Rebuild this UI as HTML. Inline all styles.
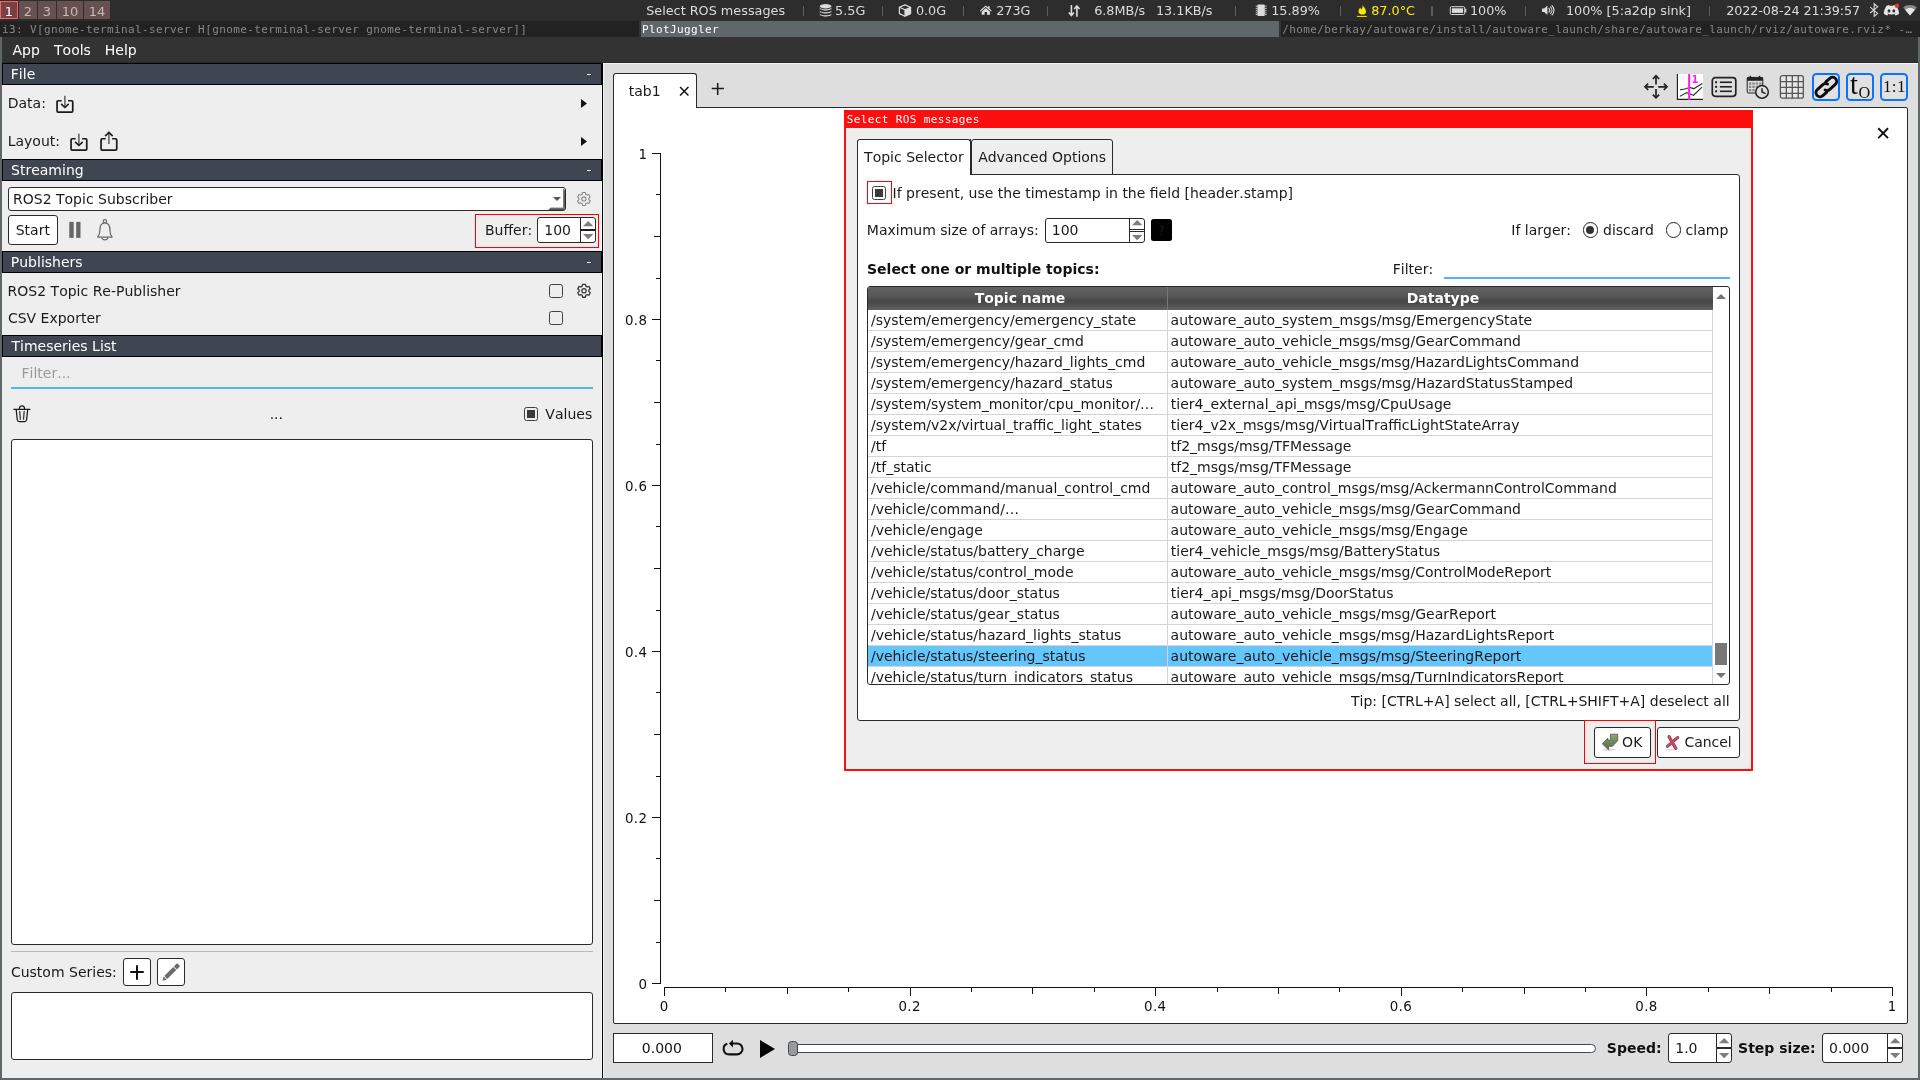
<!DOCTYPE html>
<html lang="en"><head><meta charset="utf-8"><title>PlotJuggler - Select ROS messages</title>
<style>
html,body{margin:0;padding:0}
body{width:1920px;height:1080px;position:relative;overflow:hidden;background:#2d2d2d;font-family:'DejaVu Sans','Liberation Sans',sans-serif;font-size:14px;color:#1a1a1a}
body div,body span.t,body svg{position:absolute;box-sizing:border-box}
svg{overflow:visible}
span.t{white-space:pre;font-kerning:none}
.hdr{background:#3f4651;border:1px solid #000}
.wb{background:#fff;border:1px solid #2a2a2a;border-radius:3px}
</style></head>
<body>
<div id="root" style="left:0;top:0;width:1920px;height:1080px;will-change:transform">
<div style="left:0px;top:0px;width:1920px;height:21px;background:#2d2d2d"></div>
<div style="left:0px;top:1px;width:18px;height:18px;background:#7d3f42;border:1px solid #e86a6a"></div>
<span class="t" style="left:0px;top:4px;font-size:13px;line-height:16px;color:#ffffff;width:18px;text-align:center;">1</span>
<div style="left:19px;top:1px;width:18px;height:18px;background:#665050"></div>
<span class="t" style="left:19px;top:4px;font-size:13px;line-height:16px;color:#c9b9b9;width:18px;text-align:center;">2</span>
<div style="left:38px;top:1px;width:18px;height:18px;background:#665050"></div>
<span class="t" style="left:38px;top:4px;font-size:13px;line-height:16px;color:#c9b9b9;width:18px;text-align:center;">3</span>
<div style="left:57px;top:1px;width:26px;height:18px;background:#665050"></div>
<span class="t" style="left:57px;top:4px;font-size:13px;line-height:16px;color:#c9b9b9;width:26px;text-align:center;">10</span>
<div style="left:84px;top:1px;width:26px;height:18px;background:#665050"></div>
<span class="t" style="left:84px;top:4px;font-size:13px;line-height:16px;color:#c9b9b9;width:26px;text-align:center;">14</span>
<span class="t" style="left:646.18px;top:3px;font-size:12.8px;line-height:15px;color:#dcdcdc;">Select ROS messages</span>
<div style="left:802.8px;top:5.6px;width:1.2px;height:10.8px;background:#5c5c5c"></div>
<div style="left:882.2px;top:5.6px;width:1.2px;height:10.8px;background:#5c5c5c"></div>
<div style="left:963.0px;top:5.6px;width:1.2px;height:10.8px;background:#5c5c5c"></div>
<div style="left:1047.2px;top:5.6px;width:1.2px;height:10.8px;background:#5c5c5c"></div>
<div style="left:1235.2px;top:5.6px;width:1.2px;height:10.8px;background:#5c5c5c"></div>
<div style="left:1340.3px;top:5.6px;width:1.2px;height:10.8px;background:#5c5c5c"></div>
<div style="left:1431.4px;top:5.6px;width:1.2px;height:10.8px;background:#5c5c5c"></div>
<div style="left:1524.8px;top:5.6px;width:1.2px;height:10.8px;background:#5c5c5c"></div>
<div style="left:1709.3px;top:5.6px;width:1.2px;height:10.8px;background:#5c5c5c"></div>
<span class="t" style="left:835.11px;top:3px;font-size:12.8px;line-height:15px;color:#dcdcdc;">5.5G</span>
<span class="t" style="left:915.88px;top:3px;font-size:12.8px;line-height:15px;color:#dcdcdc;">0.0G</span>
<span class="t" style="left:996.13px;top:3px;font-size:12.8px;line-height:15px;color:#dcdcdc;">273G</span>
<span class="t" style="left:1094.15px;top:3px;font-size:12.8px;line-height:15px;color:#dcdcdc;">6.8MB/s</span>
<span class="t" style="left:1155.9px;top:3px;font-size:12.8px;line-height:15px;color:#dcdcdc;">13.1KB/s</span>
<span class="t" style="left:1271.2px;top:3px;font-size:12.8px;line-height:15px;color:#dcdcdc;">15.89%</span>
<span class="t" style="left:1371.17px;top:3px;font-size:12.8px;line-height:15px;color:#ffee00;">87.0°C</span>
<span class="t" style="left:1469.9px;top:3px;font-size:12.8px;line-height:15px;color:#dcdcdc;">100%</span>
<span class="t" style="left:1565.9px;top:3px;font-size:12.8px;line-height:15px;color:#dcdcdc;">100% [5:a2dp sink]</span>
<span class="t" style="left:1726.13px;top:3px;font-size:12.8px;line-height:15px;color:#dcdcdc;letter-spacing:-0.1px;">2022-08-24 21:39:57</span>
<div style="left:0px;top:21px;width:1920px;height:16px;background:#333"></div>
<div style="left:0px;top:21px;width:639px;height:16px;background:#222"></div>
<div style="left:641px;top:21px;width:638px;height:16px;background:#5f676a"></div>
<div style="left:1281px;top:21px;width:639px;height:16px;background:#222"></div>
<span class="t" style="left:2.12px;top:23px;font-size:11px;line-height:13px;color:#888;font-family:'DejaVu Sans Mono','Liberation Mono',monospace;letter-spacing:0.378px;">i3: V[gnome-terminal-server H[gnome-terminal-server gnome-terminal-server]]</span>
<span class="t" style="left:642.07px;top:23px;font-size:11px;line-height:13px;color:#fff;font-family:'DejaVu Sans Mono','Liberation Mono',monospace;letter-spacing:0.378px;">PlotJuggler</span>
<span class="t" style="left:1282.33px;top:23px;font-size:11px;line-height:13px;color:#888;font-family:'DejaVu Sans Mono','Liberation Mono',monospace;letter-spacing:0.378px;">/home/berkay/autoware/install/autoware_launch/share/autoware_launch/rviz/autoware.rviz* -…</span>
<div style="left:0px;top:37px;width:1920px;height:1043px;background:#5f676a"></div>
<div style="left:2px;top:37px;width:1916px;height:26px;background:#333333;border-bottom:1px solid #2a2a2a"></div>
<span class="t" style="left:12.45px;top:42px;font-size:14px;line-height:17px;color:#fff;">App</span>
<span class="t" style="left:54.02px;top:42px;font-size:14px;line-height:17px;color:#fff;">Tools</span>
<span class="t" style="left:104.81px;top:42px;font-size:14px;line-height:17px;color:#fff;">Help</span>
<div style="left:2px;top:63px;width:601px;height:1015px;background:#eeeeee;border-right:1px solid #000"></div>
<div style="left:601px;top:63px;width:1px;height:1015px;background:#fafafa"></div>
<div style="left:603px;top:63px;width:1315px;height:1015px;background:#dedede;border-left:1px solid #f4f4f4;border-top:1px solid #f4f4f4"></div>
<div class="hdr" style="left:2px;top:63px;width:600px;height:22px;"></div>
<span class="t" style="left:10.81px;top:66px;font-size:14px;line-height:17px;color:#fff;">File</span>
<div style="left:586.5px;top:73.5px;width:4.5px;height:1.6px;background:#fff"></div>
<div class="hdr" style="left:2px;top:159px;width:600px;height:22px;"></div>
<span class="t" style="left:11.04px;top:162px;font-size:14px;line-height:17px;color:#fff;">Streaming</span>
<div style="left:586.5px;top:169.5px;width:4.5px;height:1.6px;background:#fff"></div>
<div class="hdr" style="left:2px;top:251px;width:600px;height:22px;"></div>
<span class="t" style="left:10.81px;top:254px;font-size:14px;line-height:17px;color:#fff;">Publishers</span>
<div style="left:586.5px;top:261.5px;width:4.5px;height:1.6px;background:#fff"></div>
<div class="hdr" style="left:2px;top:335px;width:600px;height:22px;"></div>
<span class="t" style="left:11.52px;top:338px;font-size:14px;line-height:17px;color:#fff;">Timeseries List</span>
<span class="t" style="left:7.71px;top:95px;font-size:14px;line-height:17px;color:#1a1a1a;">Data:</span>
<span class="t" style="left:7.71px;top:133px;font-size:14px;line-height:17px;color:#1a1a1a;">Layout:</span>
<svg style="left:581px;top:98.7px" width="6" height="9" viewBox="0 0 6 9"><path d="M0 0 L6 4.5 L0 9 Z" fill="#111"/></svg>
<svg style="left:581px;top:136.7px" width="6" height="9" viewBox="0 0 6 9"><path d="M0 0 L6 4.5 L0 9 Z" fill="#111"/></svg>
<div class="wb" style="left:8px;top:187px;width:558px;height:24px;"></div>
<div style="left:562.5px;top:188.5px;width:2.5px;height:21px;background:linear-gradient(90deg,#8a8a8a,#4a4a4a);border-radius:0 2px 2px 0"></div>
<svg style="left:548px;top:207px" width="17" height="3" viewBox="0 0 17 3"><defs><linearGradient id="cbg" x1="0" y1="0" x2="0" y2="1"><stop offset="0" stop-color="#8a8a8a"/><stop offset="1" stop-color="#444"/></linearGradient></defs><path d="M0.5 3 L2.5 0.4 H17 V3 Z" fill="url(#cbg)"/></svg>
<span class="t" style="left:13.01px;top:191px;font-size:14px;line-height:17px;color:#1a1a1a;">ROS2 Topic Subscriber</span>
<svg style="left:553px;top:197px" width="8" height="4" viewBox="0 0 8 4"><path d="M0 0 H8 L4 4 Z" fill="#555"/></svg>
<div class="wb" style="left:8px;top:215px;width:50px;height:30px;"></div>
<span class="t" style="left:15.74px;top:222px;font-size:14px;line-height:17px;color:#1a1a1a;">Start</span>
<svg style="left:69px;top:221px" width="12" height="18" viewBox="0 0 12 18"><rect x="0.3" y="0.9" width="4.4" height="16" fill="#666"/><rect x="7.2" y="0.9" width="4.3" height="16" fill="#666"/></svg>
<div style="left:475px;top:214px;width:124px;height:34px;border:1px solid #f00"></div>
<span class="t" style="left:484.91px;top:222px;font-size:14px;line-height:17px;color:#1a1a1a;">Buffer:</span>
<div class="wb" style="left:537px;top:217px;width:59px;height:26px;"></div>
<div style="left:580px;top:217px;width:1px;height:26px;background:#2a2a2a"></div>
<div style="left:580px;top:229.0px;width:16px;height:2px;background:#222"></div>
<svg style="left:582.8px;top:220.6px" width="10.4" height="5.2" viewBox="0 0 10 5"><path d="M0 5 L5 0 L10 5 Z" fill="#7d7d7d"/></svg>
<svg style="left:582.8px;top:234.20000000000002px" width="10.4" height="5.2" viewBox="0 0 10 5"><path d="M0 0 L5 5 L10 0 Z" fill="#7d7d7d"/></svg>
<span class="t" style="left:544.23px;top:222px;font-size:14px;line-height:17px;color:#1a1a1a;">100</span>
<span class="t" style="left:7.61px;top:283px;font-size:14px;line-height:17px;color:#1a1a1a;">ROS2 Topic Re-Publisher</span>
<span class="t" style="left:7.91px;top:310px;font-size:14px;line-height:17px;color:#1a1a1a;">CSV Exporter</span>
<div style="left:549px;top:284px;width:14px;height:14px;border:1px solid #404040;border-radius:2.5px"></div>
<div style="left:549px;top:311px;width:14px;height:14px;border:1px solid #404040;border-radius:2.5px"></div>
<span class="t" style="left:21.51px;top:365px;font-size:14px;line-height:17px;color:#9a9a9a;">Filter...</span>
<div style="left:11px;top:387px;width:582px;height:2px;background:#4fb6f2"></div>
<span class="t" style="left:269.65px;top:406px;font-size:14px;line-height:17px;color:#1a1a1a;">...</span>
<div style="left:524px;top:407px;width:14px;height:14px;border:1px solid #404040;border-radius:2.5px"></div>
<div style="left:527px;top:410px;width:8px;height:8px;background:#3a3a3a"></div>
<span class="t" style="left:545.35px;top:406px;font-size:14px;line-height:17px;color:#1a1a1a;">Values</span>
<div class="wb" style="left:11px;top:439px;width:582px;height:506px;"></div>
<div style="left:11px;top:951px;width:582px;height:1px;background:#b8b8b8"></div>
<span class="t" style="left:10.91px;top:964px;font-size:14px;line-height:17px;color:#1a1a1a;">Custom Series:</span>
<div class="wb" style="left:123px;top:958px;width:28px;height:28px;"></div>
<div class="wb" style="left:157px;top:958px;width:28px;height:28px;"></div>
<div style="left:130px;top:971px;width:14px;height:2px;background:#111;border-radius:1px"></div>
<div style="left:136px;top:965px;width:2px;height:15px;background:#111;border-radius:1px"></div>
<div class="wb" style="left:11px;top:992px;width:582px;height:68px;"></div>
<div style="left:613px;top:107px;width:1295px;height:917px;background:#fff;border:1px solid #2a2a2a;border-radius:0 2px 2px 2px"></div>
<div style="left:613px;top:73px;width:84px;height:35px;background:#fff;border:1px solid #2a2a2a;border-bottom:none;border-radius:3px 3px 0 0"></div>
<span class="t" style="left:628.81px;top:83px;font-size:14px;line-height:17px;color:#1a1a1a;">tab1</span>
<svg style="left:679px;top:86.2px" width="10.5" height="10.5" viewBox="0 0 10 10"><path d="M1 1 L9 9 M9 1 L1 9" stroke="#111" stroke-width="1.4" fill="none"/></svg>
<svg style="left:711px;top:82px" width="14" height="14" viewBox="0 0 14 14"><path d="M0.7 6.4 H12.9 M6.7 0.9 V13.1" stroke="#1c1c1c" stroke-width="1.55" fill="none"/></svg>
<svg style="left:1876.6px;top:127.2px" width="12.3" height="12.3" viewBox="0 0 10 10"><path d="M1 1 L9 9 M9 1 L1 9" stroke="#111" stroke-width="1.5" fill="none"/></svg>
<div style="left:1812px;top:73px;width:28px;height:28px;border:2px solid #0b74ff;border-radius:4.5px;background:#e1e1e1"></div>
<div style="left:1846px;top:73px;width:28px;height:28px;border:2px solid #0b74ff;border-radius:4.5px;background:#e1e1e1"></div>
<div style="left:1880px;top:73px;width:28px;height:28px;border:2px solid #0b74ff;border-radius:4.5px;background:#e1e1e1"></div>
<span class="t" style="left:1850.3px;top:69.8px;font-family:'Liberation Serif','DejaVu Serif',serif;font-size:27px;line-height:30px;color:#111;transform:scale(1.06,1.09);transform-origin:0 24px">t</span>
<span class="t" style="left:1858.5px;top:84.3px;font-family:'Liberation Serif','DejaVu Serif',serif;font-size:16.3px;line-height:18px;color:#111">O</span>
<span class="t" style="left:1882.9px;top:77.2px;font-family:'Liberation Serif','DejaVu Serif',serif;font-size:17px;line-height:20px;letter-spacing:0.45px;color:#111">1:1</span>
<div style="left:660px;top:153px;width:1px;height:831px;background:#111"></div>
<div style="left:664px;top:987px;width:1229px;height:1px;background:#111"></div>
<div style="left:652px;top:983px;width:8px;height:1px;background:#111"></div>
<div style="left:664px;top:987px;width:1px;height:9px;background:#111"></div>
<div style="left:656px;top:942px;width:4px;height:1px;background:#111"></div>
<div style="left:725px;top:987px;width:1px;height:5px;background:#111"></div>
<div style="left:654px;top:900px;width:6px;height:1px;background:#111"></div>
<div style="left:787px;top:987px;width:1px;height:7px;background:#111"></div>
<div style="left:656px;top:858px;width:4px;height:1px;background:#111"></div>
<div style="left:848px;top:987px;width:1px;height:5px;background:#111"></div>
<div style="left:652px;top:817px;width:8px;height:1px;background:#111"></div>
<div style="left:910px;top:987px;width:1px;height:9px;background:#111"></div>
<div style="left:656px;top:776px;width:4px;height:1px;background:#111"></div>
<div style="left:971px;top:987px;width:1px;height:5px;background:#111"></div>
<div style="left:654px;top:734px;width:6px;height:1px;background:#111"></div>
<div style="left:1032px;top:987px;width:1px;height:7px;background:#111"></div>
<div style="left:656px;top:692px;width:4px;height:1px;background:#111"></div>
<div style="left:1094px;top:987px;width:1px;height:5px;background:#111"></div>
<div style="left:652px;top:651px;width:8px;height:1px;background:#111"></div>
<div style="left:1155px;top:987px;width:1px;height:9px;background:#111"></div>
<div style="left:656px;top:610px;width:4px;height:1px;background:#111"></div>
<div style="left:1217px;top:987px;width:1px;height:5px;background:#111"></div>
<div style="left:654px;top:568px;width:6px;height:1px;background:#111"></div>
<div style="left:1278px;top:987px;width:1px;height:7px;background:#111"></div>
<div style="left:656px;top:526px;width:4px;height:1px;background:#111"></div>
<div style="left:1339px;top:987px;width:1px;height:5px;background:#111"></div>
<div style="left:652px;top:485px;width:8px;height:1px;background:#111"></div>
<div style="left:1401px;top:987px;width:1px;height:9px;background:#111"></div>
<div style="left:656px;top:444px;width:4px;height:1px;background:#111"></div>
<div style="left:1462px;top:987px;width:1px;height:5px;background:#111"></div>
<div style="left:654px;top:402px;width:6px;height:1px;background:#111"></div>
<div style="left:1524px;top:987px;width:1px;height:7px;background:#111"></div>
<div style="left:656px;top:360px;width:4px;height:1px;background:#111"></div>
<div style="left:1585px;top:987px;width:1px;height:5px;background:#111"></div>
<div style="left:652px;top:319px;width:8px;height:1px;background:#111"></div>
<div style="left:1646px;top:987px;width:1px;height:9px;background:#111"></div>
<div style="left:656px;top:278px;width:4px;height:1px;background:#111"></div>
<div style="left:1708px;top:987px;width:1px;height:5px;background:#111"></div>
<div style="left:654px;top:236px;width:6px;height:1px;background:#111"></div>
<div style="left:1769px;top:987px;width:1px;height:7px;background:#111"></div>
<div style="left:656px;top:194px;width:4px;height:1px;background:#111"></div>
<div style="left:1831px;top:987px;width:1px;height:5px;background:#111"></div>
<div style="left:652px;top:153px;width:8px;height:1px;background:#111"></div>
<div style="left:1892px;top:987px;width:1px;height:9px;background:#111"></div>
<span class="t" style="left:597.4px;top:977px;font-size:13.4px;line-height:16px;color:#111;width:50px;text-align:right;letter-spacing:0.4px;">0</span>
<span class="t" style="left:634.1px;top:999px;font-size:13.4px;line-height:16px;color:#111;width:60px;text-align:center;letter-spacing:0.4px;">0</span>
<span class="t" style="left:597.4px;top:811px;font-size:13.4px;line-height:16px;color:#111;width:50px;text-align:right;letter-spacing:0.4px;">0.2</span>
<span class="t" style="left:879.7px;top:999px;font-size:13.4px;line-height:16px;color:#111;width:60px;text-align:center;letter-spacing:0.4px;">0.2</span>
<span class="t" style="left:597.4px;top:645px;font-size:13.4px;line-height:16px;color:#111;width:50px;text-align:right;letter-spacing:0.4px;">0.4</span>
<span class="t" style="left:1125.3px;top:999px;font-size:13.4px;line-height:16px;color:#111;width:60px;text-align:center;letter-spacing:0.4px;">0.4</span>
<span class="t" style="left:597.4px;top:479px;font-size:13.4px;line-height:16px;color:#111;width:50px;text-align:right;letter-spacing:0.4px;">0.6</span>
<span class="t" style="left:1370.9px;top:999px;font-size:13.4px;line-height:16px;color:#111;width:60px;text-align:center;letter-spacing:0.4px;">0.6</span>
<span class="t" style="left:597.4px;top:313px;font-size:13.4px;line-height:16px;color:#111;width:50px;text-align:right;letter-spacing:0.4px;">0.8</span>
<span class="t" style="left:1616.5px;top:999px;font-size:13.4px;line-height:16px;color:#111;width:60px;text-align:center;letter-spacing:0.4px;">0.8</span>
<span class="t" style="left:597.4px;top:147px;font-size:13.4px;line-height:16px;color:#111;width:50px;text-align:right;letter-spacing:0.4px;">1</span>
<span class="t" style="left:1862.1px;top:999px;font-size:13.4px;line-height:16px;color:#111;width:60px;text-align:center;letter-spacing:0.4px;">1</span>
<div style="left:613px;top:1033px;width:100px;height:30px;background:#fff;border:1px solid #2a2a2a"></div>
<span class="t" style="left:611.9px;top:1040px;font-size:14px;line-height:17px;color:#111;width:100px;text-align:center;">0.000</span>
<svg style="left:760px;top:1039.5px" width="15" height="18" viewBox="0 0 15 18"><path d="M0 0 L15 9 L0 18 Z" fill="#000"/></svg>
<div style="left:788px;top:1044px;width:808px;height:9px;background:#fff;border:1px solid #3a4a55;border-radius:4.5px"></div>
<div style="left:788px;top:1040.5px;width:9.5px;height:15px;background:#9a9a9a;border:1px solid #3a4a55;border-radius:3.5px"></div>
<span class="t" style="left:1606.8px;top:1040px;font-size:14px;line-height:17px;color:#111;font-weight:bold;">Speed:</span>
<div class="wb" style="left:1668px;top:1033px;width:64px;height:30px;"></div>
<div style="left:1716px;top:1033px;width:1px;height:30px;background:#2a2a2a"></div>
<div style="left:1716px;top:1047.25px;width:16px;height:1.5px;background:#2a2a2a"></div>
<svg style="left:1718.8px;top:1037.5px" width="10.4" height="5.2" viewBox="0 0 10 5"><path d="M0 5 L5 0 L10 5 Z" fill="#7d7d7d"/></svg>
<svg style="left:1718.8px;top:1053.3px" width="10.4" height="5.2" viewBox="0 0 10 5"><path d="M0 0 L5 5 L10 0 Z" fill="#7d7d7d"/></svg>
<span class="t" style="left:1675.23px;top:1040px;font-size:14px;line-height:17px;color:#1a1a1a;">1.0</span>
<span class="t" style="left:1738.1px;top:1040px;font-size:14px;line-height:17px;color:#111;font-weight:bold;">Step size:</span>
<div class="wb" style="left:1822px;top:1033px;width:81px;height:30px;"></div>
<div style="left:1887px;top:1033px;width:1px;height:30px;background:#2a2a2a"></div>
<div style="left:1887px;top:1047.25px;width:16px;height:1.5px;background:#2a2a2a"></div>
<svg style="left:1889.8px;top:1037.5px" width="10.4" height="5.2" viewBox="0 0 10 5"><path d="M0 5 L5 0 L10 5 Z" fill="#7d7d7d"/></svg>
<svg style="left:1889.8px;top:1053.3px" width="10.4" height="5.2" viewBox="0 0 10 5"><path d="M0 0 L5 5 L10 0 Z" fill="#7d7d7d"/></svg>
<span class="t" style="left:1829.04px;top:1040px;font-size:14px;line-height:17px;color:#1a1a1a;">0.000</span>
<div style="left:844px;top:110px;width:909px;height:661px;background:#eeeeee;border:2px solid #fb0f0f;border-top-width:18px"></div>
<span class="t" style="left:846.63px;top:113px;font-size:11px;line-height:13px;color:#fff;font-family:'DejaVu Sans Mono','Liberation Mono',monospace;letter-spacing:0.378px;">Select ROS messages</span>
<div class="wb" style="left:857px;top:174px;width:883px;height:547px;border-radius:0 3px 3px 3px"></div>
<div style="left:971px;top:139px;width:142px;height:36px;background:#eeeeee;border:1px solid #2a2a2a;border-radius:3px 3px 0 0"></div>
<div style="left:857px;top:139px;width:114px;height:36px;background:#fff;border:1px solid #2a2a2a;border-bottom:none;border-radius:3px 3px 0 0"></div>
<div style="left:970px;top:139px;width:1px;height:36px;background:#2a2a2a"></div>
<span class="t" style="left:864.12px;top:149px;font-size:14px;line-height:17px;color:#1a1a1a;">Topic Selector</span>
<span class="t" style="left:978.15px;top:149px;font-size:14px;line-height:17px;color:#1a1a1a;">Advanced Options</span>
<div style="left:867px;top:181px;width:25px;height:23px;border:1px solid #f00"></div>
<div style="left:872px;top:186px;width:14px;height:14px;border:1px solid #404040;border-radius:2.5px"></div>
<div style="left:875px;top:189px;width:8px;height:8px;background:#3a3a3a"></div>
<span class="t" style="left:892.61px;top:185px;font-size:14px;line-height:17px;color:#1a1a1a;">If present, use the timestamp in the field [header.stamp]</span>
<span class="t" style="left:866.81px;top:222px;font-size:14px;line-height:17px;color:#1a1a1a;">Maximum size of arrays:</span>
<div class="wb" style="left:1045px;top:218px;width:100px;height:25px;"></div>
<div style="left:1129px;top:218px;width:1px;height:25px;background:#2a2a2a"></div>
<div style="left:1129px;top:229.0px;width:16px;height:1px;background:#2a2a2a"></div>
<div style="left:1129px;top:231.0px;width:16px;height:1px;background:#2a2a2a"></div>
<svg style="left:1131.8px;top:220.4px" width="10.4" height="5.2" viewBox="0 0 10 5"><path d="M0 5 L5 0 L10 5 Z" fill="#7d7d7d"/></svg>
<svg style="left:1131.8px;top:235.4px" width="10.4" height="5.2" viewBox="0 0 10 5"><path d="M0 0 L5 5 L10 0 Z" fill="#7d7d7d"/></svg>
<span class="t" style="left:1051.73px;top:222px;font-size:14px;line-height:17px;color:#1a1a1a;">100</span>
<div style="left:1151.3px;top:219.3px;width:20.4px;height:21.3px;background:#000;border-radius:2.5px"></div>
<span class="t" style="left:1151.3px;top:224px;font-size:12px;line-height:14px;color:#1d1d1d;width:20.4px;text-align:center;">?</span>
<span class="t" style="left:1511.31px;top:222px;font-size:14px;line-height:17px;color:#1a1a1a;">If larger:</span>
<div style="left:1582.5px;top:222px;width:15.5px;height:15.5px;border:1px solid #222;border-radius:50%;background:#fff"></div>
<div style="left:1586.25px;top:225.75px;width:8px;height:8px;background:#333;border-radius:50%"></div>
<span class="t" style="left:1603.01px;top:222px;font-size:14px;line-height:17px;color:#1a1a1a;">discard</span>
<div style="left:1665.5px;top:222px;width:15.5px;height:15.5px;border:1px solid #222;border-radius:50%;background:#fff"></div>
<span class="t" style="left:1685.61px;top:222px;font-size:14px;line-height:17px;color:#1a1a1a;">clamp</span>
<span class="t" style="left:867.0px;top:261px;font-size:14px;line-height:17px;color:#111;font-weight:bold;">Select one or multiple topics:</span>
<span class="t" style="left:1392.71px;top:261px;font-size:14px;line-height:17px;color:#1a1a1a;">Filter:</span>
<div style="left:1444px;top:277px;width:286px;height:2px;background:#4fb6f2"></div>
<div style="left:867px;top:286px;width:863px;height:399px;background:#fff;border:1px solid #2a2a2a;border-radius:3px;overflow:hidden">
<div style="left:0px;top:0px;width:845px;height:23px;background:linear-gradient(#636363 0%,#575757 40%,#474747 58%,#4b4b4b 72%,#626262 100%)"></div>
<div style="left:299px;top:0px;width:1px;height:23px;background:#777"></div>
<div style="left:0px;top:43px;width:845px;height:1px;background:#d4d4d4"></div>
<div style="left:0px;top:64px;width:845px;height:1px;background:#d4d4d4"></div>
<div style="left:0px;top:85px;width:845px;height:1px;background:#d4d4d4"></div>
<div style="left:0px;top:106px;width:845px;height:1px;background:#d4d4d4"></div>
<div style="left:0px;top:127px;width:845px;height:1px;background:#d4d4d4"></div>
<div style="left:0px;top:148px;width:845px;height:1px;background:#d4d4d4"></div>
<div style="left:0px;top:169px;width:845px;height:1px;background:#d4d4d4"></div>
<div style="left:0px;top:190px;width:845px;height:1px;background:#d4d4d4"></div>
<div style="left:0px;top:211px;width:845px;height:1px;background:#d4d4d4"></div>
<div style="left:0px;top:232px;width:845px;height:1px;background:#d4d4d4"></div>
<div style="left:0px;top:253px;width:845px;height:1px;background:#d4d4d4"></div>
<div style="left:0px;top:274px;width:845px;height:1px;background:#d4d4d4"></div>
<div style="left:0px;top:295px;width:845px;height:1px;background:#d4d4d4"></div>
<div style="left:0px;top:316px;width:845px;height:1px;background:#d4d4d4"></div>
<div style="left:0px;top:337px;width:845px;height:1px;background:#d4d4d4"></div>
<div style="left:0px;top:358px;width:845px;height:1px;background:#d4d4d4"></div>
<div style="left:0px;top:359px;width:845px;height:20px;background:#65c6fc"></div>
<div style="left:0px;top:379px;width:845px;height:1px;background:#d4d4d4"></div>
<div style="left:0px;top:400px;width:845px;height:1px;background:#d4d4d4"></div>
<div style="left:299px;top:23px;width:1px;height:380px;background:#d4d4d4"></div>
<div style="left:844px;top:23px;width:1px;height:380px;background:#d4d4d4"></div>
<div style="left:847px;top:356px;width:12px;height:22px;background:#777"></div>
<span class="t" style="left:3.0px;top:25px;font-size:14px;line-height:17px;color:#1a1a1a;">/system/emergency/emergency_state</span>
<span class="t" style="left:302.58px;top:25px;font-size:14px;line-height:17px;color:#1a1a1a;">autoware_auto_system_msgs/msg/EmergencyState</span>
<span class="t" style="left:3.0px;top:46px;font-size:14px;line-height:17px;color:#1a1a1a;">/system/emergency/gear_cmd</span>
<span class="t" style="left:302.58px;top:46px;font-size:14px;line-height:17px;color:#1a1a1a;">autoware_auto_vehicle_msgs/msg/GearCommand</span>
<span class="t" style="left:3.0px;top:67px;font-size:14px;line-height:17px;color:#1a1a1a;">/system/emergency/hazard_lights_cmd</span>
<span class="t" style="left:302.58px;top:67px;font-size:14px;line-height:17px;color:#1a1a1a;">autoware_auto_vehicle_msgs/msg/HazardLightsCommand</span>
<span class="t" style="left:3.0px;top:88px;font-size:14px;line-height:17px;color:#1a1a1a;">/system/emergency/hazard_status</span>
<span class="t" style="left:302.58px;top:88px;font-size:14px;line-height:17px;color:#1a1a1a;">autoware_auto_system_msgs/msg/HazardStatusStamped</span>
<span class="t" style="left:3.0px;top:109px;font-size:14px;line-height:17px;color:#1a1a1a;">/system/system_monitor/cpu_monitor/…</span>
<span class="t" style="left:302.81px;top:109px;font-size:14px;line-height:17px;color:#1a1a1a;">tier4_external_api_msgs/msg/CpuUsage</span>
<span class="t" style="left:3.0px;top:130px;font-size:14px;line-height:17px;color:#1a1a1a;">/system/v2x/virtual_traffic_light_states</span>
<span class="t" style="left:302.81px;top:130px;font-size:14px;line-height:17px;color:#1a1a1a;">tier4_v2x_msgs/msg/VirtualTrafficLightStateArray</span>
<span class="t" style="left:3.0px;top:151px;font-size:14px;line-height:17px;color:#1a1a1a;">/tf</span>
<span class="t" style="left:302.81px;top:151px;font-size:14px;line-height:17px;color:#1a1a1a;">tf2_msgs/msg/TFMessage</span>
<span class="t" style="left:3.0px;top:172px;font-size:14px;line-height:17px;color:#1a1a1a;">/tf_static</span>
<span class="t" style="left:302.81px;top:172px;font-size:14px;line-height:17px;color:#1a1a1a;">tf2_msgs/msg/TFMessage</span>
<span class="t" style="left:3.0px;top:193px;font-size:14px;line-height:17px;color:#1a1a1a;">/vehicle/command/manual_control_cmd</span>
<span class="t" style="left:302.58px;top:193px;font-size:14px;line-height:17px;color:#1a1a1a;">autoware_auto_control_msgs/msg/AckermannControlCommand</span>
<span class="t" style="left:3.0px;top:214px;font-size:14px;line-height:17px;color:#1a1a1a;">/vehicle/command/…</span>
<span class="t" style="left:302.58px;top:214px;font-size:14px;line-height:17px;color:#1a1a1a;">autoware_auto_vehicle_msgs/msg/GearCommand</span>
<span class="t" style="left:3.0px;top:235px;font-size:14px;line-height:17px;color:#1a1a1a;">/vehicle/engage</span>
<span class="t" style="left:302.58px;top:235px;font-size:14px;line-height:17px;color:#1a1a1a;">autoware_auto_vehicle_msgs/msg/Engage</span>
<span class="t" style="left:3.0px;top:256px;font-size:14px;line-height:17px;color:#1a1a1a;">/vehicle/status/battery_charge</span>
<span class="t" style="left:302.81px;top:256px;font-size:14px;line-height:17px;color:#1a1a1a;">tier4_vehicle_msgs/msg/BatteryStatus</span>
<span class="t" style="left:3.0px;top:277px;font-size:14px;line-height:17px;color:#1a1a1a;">/vehicle/status/control_mode</span>
<span class="t" style="left:302.58px;top:277px;font-size:14px;line-height:17px;color:#1a1a1a;">autoware_auto_vehicle_msgs/msg/ControlModeReport</span>
<span class="t" style="left:3.0px;top:298px;font-size:14px;line-height:17px;color:#1a1a1a;">/vehicle/status/door_status</span>
<span class="t" style="left:302.81px;top:298px;font-size:14px;line-height:17px;color:#1a1a1a;">tier4_api_msgs/msg/DoorStatus</span>
<span class="t" style="left:3.0px;top:319px;font-size:14px;line-height:17px;color:#1a1a1a;">/vehicle/status/gear_status</span>
<span class="t" style="left:302.58px;top:319px;font-size:14px;line-height:17px;color:#1a1a1a;">autoware_auto_vehicle_msgs/msg/GearReport</span>
<span class="t" style="left:3.0px;top:340px;font-size:14px;line-height:17px;color:#1a1a1a;">/vehicle/status/hazard_lights_status</span>
<span class="t" style="left:302.58px;top:340px;font-size:14px;line-height:17px;color:#1a1a1a;">autoware_auto_vehicle_msgs/msg/HazardLightsReport</span>
<span class="t" style="left:3.0px;top:361px;font-size:14px;line-height:17px;color:#1a1a1a;">/vehicle/status/steering_status</span>
<span class="t" style="left:302.58px;top:361px;font-size:14px;line-height:17px;color:#1a1a1a;">autoware_auto_vehicle_msgs/msg/SteeringReport</span>
<span class="t" style="left:3.0px;top:382px;font-size:14px;line-height:17px;color:#1a1a1a;">/vehicle/status/turn_indicators_status</span>
<span class="t" style="left:302.58px;top:382px;font-size:14px;line-height:17px;color:#1a1a1a;">autoware_auto_vehicle_msgs/msg/TurnIndicatorsReport</span>
<span class="t" style="left:2.5px;top:3px;font-size:14px;line-height:17px;color:#fff;font-weight:bold;width:299px;text-align:center;">Topic name</span>
<span class="t" style="left:302.5px;top:3px;font-size:14px;line-height:17px;color:#fff;font-weight:bold;width:545px;text-align:center;">Datatype</span>
<svg style="left:848px;top:6.699999999999989px" width="10" height="5" viewBox="0 0 10 5"><path d="M0 5 L5 0 L10 5 Z" fill="#757575"/></svg>
<svg style="left:848px;top:386px" width="10" height="5" viewBox="0 0 10 5"><path d="M0 0 L5 5 L10 0 Z" fill="#757575"/></svg>
</div>
<span class="t" style="left:1351.02px;top:693px;font-size:14px;line-height:17px;color:#1a1a1a;">Tip: [CTRL+A] select all, [CTRL+SHIFT+A] deselect all</span>
<div style="left:1584px;top:720px;width:72px;height:44px;border:1px solid #f00"></div>
<div class="wb" style="left:1594px;top:727px;width:57px;height:31px;"></div>
<div class="wb" style="left:1657px;top:727px;width:83px;height:31px;"></div>
<span class="t" style="left:1622.11px;top:734px;font-size:14px;line-height:17px;color:#1a1a1a;">OK</span>
<span class="t" style="left:1684.61px;top:734px;font-size:14px;line-height:17px;color:#1a1a1a;letter-spacing:-0.1px;">Cancel</span>
<svg style="left:56px;top:95px;" width="18" height="18" viewBox="0 0 18 18"><path d="M5.7 5.75 H2.2 Q1.05 5.75 1.05 6.9 V16 Q1.05 17.1 2.2 17.1 H15.6 Q16.75 17.1 16.75 16 V6.9 Q16.75 5.75 15.6 5.75 H12.1" fill="none" stroke="#1a1a1a" stroke-width="1.7"/><path d="M8.9 0.7 V12" stroke="#444" stroke-width="1.3" fill="none"/><path d="M5.1 8.9 L8.9 12.5 L12.7 8.9" fill="none" stroke="#1a1a1a" stroke-width="1.6"/></svg>
<svg style="left:70px;top:133px;" width="18" height="18" viewBox="0 0 18 18"><path d="M5.7 5.75 H2.2 Q1.05 5.75 1.05 6.9 V16 Q1.05 17.1 2.2 17.1 H15.6 Q16.75 17.1 16.75 16 V6.9 Q16.75 5.75 15.6 5.75 H12.1" fill="none" stroke="#1a1a1a" stroke-width="1.7"/><path d="M8.9 0.7 V12" stroke="#444" stroke-width="1.3" fill="none"/><path d="M5.1 8.9 L8.9 12.5 L12.7 8.9" fill="none" stroke="#1a1a1a" stroke-width="1.6"/></svg>
<svg style="left:100px;top:131px;" width="18" height="20" viewBox="0 0 18 20"><path d="M5.7 7.75 H2.2 Q1.05 7.75 1.05 8.9 V18 Q1.05 19.1 2.2 19.1 H15.6 Q16.75 19.1 16.75 18 V8.9 Q16.75 7.75 15.6 7.75 H12.1" fill="none" stroke="#1a1a1a" stroke-width="1.7"/><path d="M8.9 13 V1.6" stroke="#444" stroke-width="1.3" fill="none"/><path d="M5.1 5.1 L8.9 1.4 L12.7 5.1" fill="none" stroke="#1a1a1a" stroke-width="1.6"/></svg>
<svg style="left:96px;top:218px;" width="18" height="24" viewBox="0 0 18 24"><g fill="none" stroke="#6a6a6a" stroke-width="1.25"><ellipse cx="8.9" cy="3.2" rx="1.7" ry="1.5"/><path d="M1.7 19 C3.4 17 3.9 15 3.9 12 C3.9 8 5.6 4.9 8.9 4.9 C12.2 4.9 13.9 8 13.9 12 C13.9 15 14.4 17 16.1 19 Z" stroke-linejoin="round"/><path d="M5.9 19.6 A3.1 3.1 0 0 0 11.9 19.6"/></g></svg>
<svg style="left:575px;top:190px;" width="18" height="18" viewBox="0 0 18 18"><path d="M7.11 4.28 L7.46 2.46 L10.34 2.46 L10.69 4.28 A5.0 5.0 0 0 1 12.05 5.06 L13.80 4.46 L15.24 6.95 L13.84 8.17 A5.0 5.0 0 0 1 13.84 9.73 L15.24 10.95 L13.80 13.44 L12.05 12.84 A5.0 5.0 0 0 1 10.69 13.62 L10.34 15.44 L7.46 15.44 L7.11 13.62 A5.0 5.0 0 0 1 5.75 12.84 L4.00 13.44 L2.56 10.95 L3.96 9.73 A5.0 5.0 0 0 1 3.96 8.17 L2.56 6.95 L4.00 4.46 L5.75 5.06 A5.0 5.0 0 0 1 7.11 4.28 Z" fill="none" stroke="#8a8a8a" stroke-width="1.1" stroke-linejoin="round"/><circle cx="8.9" cy="8.95" r="2.1" fill="none" stroke="#8a8a8a" stroke-width="1.1"/></svg>
<svg style="left:575px;top:282px;" width="18" height="18" viewBox="0 0 18 18"><path d="M7.24 4.23 L7.57 2.36 L10.43 2.36 L10.76 4.23 A4.9 4.9 0 0 1 12.08 4.99 L13.87 4.34 L15.29 6.82 L13.84 8.03 A4.9 4.9 0 0 1 13.84 9.57 L15.29 10.78 L13.87 13.26 L12.08 12.61 A4.9 4.9 0 0 1 10.76 13.37 L10.43 15.24 L7.57 15.24 L7.24 13.37 A4.9 4.9 0 0 1 5.92 12.61 L4.13 13.26 L2.71 10.78 L4.16 9.57 A4.9 4.9 0 0 1 4.16 8.03 L2.71 6.82 L4.13 4.34 L5.92 4.99 A4.9 4.9 0 0 1 7.24 4.23 Z" fill="none" stroke="#383838" stroke-width="1.3" stroke-linejoin="round"/><circle cx="9" cy="8.8" r="2.15" fill="none" stroke="#383838" stroke-width="1.3"/></svg>
<svg style="left:13px;top:404px;" width="18" height="19" viewBox="0 0 18 19"><g fill="none" stroke="#1a1a1a" stroke-width="1.25" stroke-linecap="round" stroke-linejoin="round"><path d="M0.9 5.4 H16.9"/><path d="M6.3 5.4 C6.3 0.7 11.6 0.7 11.6 5.4"/><path d="M3.2 5.6 L4.3 15.8 Q4.5 17.6 6.3 17.6 H11.6 Q13.4 17.6 13.6 15.8 L14.7 5.6"/><path d="M6.7 7.4 L7.4 15.2 M11.2 7.4 L10.5 15.2" stroke="#333"/></g></svg>
<svg style="left:160px;top:962px;" width="22" height="22" viewBox="0 0 22 22"><g transform="translate(2.5 18.8) rotate(-45)" fill="#6b6b6b"><path d="M0 0 L3.8 -2.15 V2.15 Z"/><rect x="4.7" y="-2.15" width="12.6" height="4.3"/><path d="M18.2 -2.15 H21.6 Q22.9 -2.15 22.9 -0.9 V0.9 Q22.9 2.15 21.6 2.15 H18.2 Z"/></g></svg>
<svg style="left:720px;top:1038px;" width="26" height="20" viewBox="0 0 26 20"><path d="M12.8 5.5 H17.05 A5.45 5.45 0 0 1 17.05 16.4 H9.05 A5.45 5.45 0 0 1 7.3 5.8" fill="none" stroke="#111" stroke-width="2.1"/><path d="M8.9 5.6 L13 1.8 V9.4 Z" fill="#111"/></svg>
<svg style="left:1643px;top:74px;" width="26" height="26" viewBox="0 0 26 26"><g fill="none" stroke="#222" stroke-width="1.7"><path d="M13 2.2 V10.6 M13 15 V23.4 M2.4 12.8 H10.8 M15.2 12.8 H23.6"/><path d="M9.8 5 L13 1.8 L16.2 5 M9.8 20.6 L13 23.8 L16.2 20.6 M5.2 9.6 L2 12.8 L5.2 16 M20.8 9.6 L24 12.8 L20.8 16"/></g></svg>
<svg style="left:1676px;top:73px;" width="28" height="28" viewBox="0 0 28 28"><rect x="0.8" y="1" width="26.2" height="25.9" fill="#fff"/><path d="M1.4 1 V26.3 H27" fill="none" stroke="#222" stroke-width="1.2"/><path d="M4.1 16.7 C6 16.8 8 16.6 12 15 S16 16 18 15.6 L26.4 10.5" fill="none" stroke="#333" stroke-width="1.2"/><path d="M4.1 23.3 L10.7 19.6 L17.6 22.2 L26 14.1" fill="none" stroke="#333" stroke-width="1.2"/><rect x="12.1" y="1" width="2.1" height="25.9" fill="#ff22ee"/><text x="15.6" y="9.8" font-family="'DejaVu Sans','Liberation Sans',sans-serif" font-weight="bold" font-size="10" fill="#ff22ee">1</text></svg>
<svg style="left:1710px;top:75px;" width="28" height="24" viewBox="0 0 28 24"><rect x="2.3" y="2.7" width="23.5" height="18.6" rx="3" fill="none" stroke="#222" stroke-width="1.7"/><rect x="5.1" y="6.25" width="2" height="2" fill="#222"/><rect x="9.9" y="6.45" width="12" height="1.6" fill="#222"/><rect x="5.1" y="10.8" width="2" height="2" fill="#222"/><rect x="9.9" y="11.0" width="12" height="1.6" fill="#222"/><rect x="5.1" y="15.3" width="2" height="2" fill="#222"/><rect x="9.9" y="15.5" width="12" height="1.6" fill="#222"/></svg>
<svg style="left:1745px;top:74px;" width="26" height="26" viewBox="0 0 26 26"><rect x="2.2" y="3.4" width="15.6" height="15.6" rx="1" fill="none" stroke="#222" stroke-width="1"/><rect x="2.2" y="3.4" width="15.6" height="3.4" fill="#222"/><rect x="4.6" y="1.8" width="1.4" height="3" fill="#222"/><rect x="13.8" y="1.8" width="1.4" height="3" fill="#222"/><rect x="3.9" y="8.4" width="2.4" height="2.3" fill="#8a8a8a"/><rect x="7.3" y="8.4" width="2.4" height="2.3" fill="#8a8a8a"/><rect x="10.7" y="8.4" width="2.4" height="2.3" fill="#8a8a8a"/><rect x="14.1" y="8.4" width="2.4" height="2.3" fill="#8a8a8a"/><rect x="3.9" y="11.7" width="2.4" height="2.3" fill="#8a8a8a"/><rect x="7.3" y="11.7" width="2.4" height="2.3" fill="#8a8a8a"/><rect x="10.7" y="11.7" width="2.4" height="2.3" fill="#8a8a8a"/><rect x="14.1" y="11.7" width="2.4" height="2.3" fill="#8a8a8a"/><rect x="3.9" y="15.0" width="2.4" height="2.3" fill="#8a8a8a"/><rect x="7.3" y="15.0" width="2.4" height="2.3" fill="#8a8a8a"/><rect x="10.7" y="15.0" width="2.4" height="2.3" fill="#8a8a8a"/><rect x="14.1" y="15.0" width="2.4" height="2.3" fill="#8a8a8a"/><circle cx="17" cy="17.9" r="6.3" fill="#dedede" stroke="#222" stroke-width="1.5"/><path d="M17 14.2 V17.9 L20.6 19.6" fill="none" stroke="#222" stroke-width="1.5"/></svg>
<svg style="left:1779px;top:74px;" width="26" height="26" viewBox="0 0 26 26"><rect x="0.8" y="1" width="24.1" height="23.8" rx="2" fill="#e6e6e6"/><g stroke="#555" stroke-width="1.3" fill="none"><rect x="1.4" y="1.6" width="22.9" height="22.6" rx="2"/><path d="M7.35 1.6 V24.2 M1.4 7.53 H24.3"/><path d="M13.30 1.6 V24.2 M1.4 13.46 H24.3"/><path d="M19.25 1.6 V24.2 M1.4 19.39 H24.3"/></g></svg>
<svg style="left:1812px;top:73px;" width="28" height="28" viewBox="0 0 28 28"><g transform="translate(14.3 14.0) rotate(-42)" fill="none" stroke="#0c0c0c" stroke-width="2.9" stroke-linecap="round"><path d="M-3 4.1 H-8.4 A4.1 4.1 0 0 1 -8.4 -4.1 H-1 A4.1 4.1 0 0 1 2.9 -1.4"/><path d="M3 -4.1 H8.4 A4.1 4.1 0 0 1 8.4 4.1 H1 A4.1 4.1 0 0 1 -2.9 1.4"/></g></svg>
<svg style="left:819px;top:3px;" width="14" height="16" viewBox="0 0 14 16"><g fill="#dcdcdc"><ellipse cx="6.6" cy="3.2" rx="5.9" ry="2.2"/><path d="M0.7 4.3 C0.7 7.0 12.5 7.0 12.5 4.3 V5.3 C12.5 8.2 0.7 8.2 0.7 5.3 Z"/><path d="M0.7 7.3 C0.7 10.0 12.5 10.0 12.5 7.3 V8.3 C12.5 11.2 0.7 11.2 0.7 8.3 Z"/><path d="M0.7 10.3 C0.7 13.0 12.5 13.0 12.5 10.3 V11.3 C12.5 14.200000000000001 0.7 14.200000000000001 0.7 11.3 Z"/></g></svg>
<svg style="left:898px;top:4px;" width="14" height="13" viewBox="0 0 14 13"><g fill="none" stroke="#dcdcdc" stroke-width="1.2" stroke-linejoin="round"><path d="M7 0.9 L12.6 3.3 V9.6 L7 12.2 L1.4 9.6 V3.3 Z" /><path d="M1.4 3.3 L7 5.8 L12.6 3.3 M7 5.8 V12.2"/></g><path d="M7 5.8 L12.6 3.3 V9.6 L7 12.2 Z" fill="#dcdcdc"/></svg>
<svg style="left:979px;top:4px;" width="14" height="12" viewBox="0 0 14 12"><path d="M6.8 1.4 L0.9 6.6 L1.7 7.5 L6.8 3.1 L11.9 7.5 L12.7 6.6 L10.6 4.7 V2 H9.2 V3.5 Z" fill="#dcdcdc"/><path d="M6.8 4.1 L2.6 7.7 V10.7 H5.6 V8 H8 V10.7 H11 V7.7 Z" fill="#dcdcdc"/></svg>
<svg style="left:1068px;top:4px;" width="13" height="14" viewBox="0 0 13 14"><g fill="none" stroke="#dcdcdc" stroke-width="1.6"><path d="M3.4 1 V11.2 M0.8 8.6 L3.4 11.6 L6 8.6"/><path d="M8.9 12.8 V2.4 M6.3 5 L8.9 2 L11.5 5"/></g></svg>
<svg style="left:1255px;top:4px;" width="13" height="13" viewBox="0 0 13 13"><rect x="2.4" y="0.6" width="7.4" height="11.4" rx="1" fill="#dcdcdc"/><g stroke="#dcdcdc" stroke-width="0.9"><path d="M0.7 2.2 H2.4 M9.8 2.2 H11.6"/><path d="M0.7 4.4 H2.4 M9.8 4.4 H11.6"/><path d="M0.7 6.6 H2.4 M9.8 6.6 H11.6"/><path d="M0.7 8.8 H2.4 M9.8 8.8 H11.6"/><path d="M0.7 10.6 H2.4 M9.8 10.6 H11.6"/></g></svg>
<svg style="left:1356px;top:4px;" width="12" height="14" viewBox="0 0 12 14"><path d="M6.6 0.9 C7.6 3 10 4.6 10 7.4 C10 9.6 8.4 10.6 6.4 10.6 C4.2 10.6 2.5 9.4 2.5 7.2 C2.5 5.4 3.6 4.6 4.2 3.4 C4.8 4.4 5 5 5.4 5.4 C6.4 4.2 6.8 2.6 6.6 0.9 Z" fill="#f5ea00"/><path d="M6.4 10.6 C5.2 10.6 4.6 9.8 4.6 8.9 C4.6 7.9 5.6 7.4 6 6.4 C6.6 7.4 7.9 7.8 7.9 9 C7.9 9.9 7.4 10.6 6.4 10.6 Z" fill="#2f2f2f" opacity="0.0"/><rect x="0.9" y="11.9" width="9.9" height="1" fill="#f5ea00"/></svg>
<svg style="left:1449px;top:5px;" width="18" height="11" viewBox="0 0 18 11"><rect x="1.3" y="1.7" width="14.4" height="7.8" rx="1.2" fill="none" stroke="#dcdcdc" stroke-width="1"/><rect x="2.9" y="3.3" width="11.2" height="4.6" fill="#dcdcdc"/><rect x="16.2" y="3.8" width="1.2" height="3.6" fill="#dcdcdc"/></svg>
<svg style="left:1541px;top:4px;" width="14" height="13" viewBox="0 0 14 13"><path d="M1 4.6 H3.2 L6.4 1.6 V11 L3.2 8 H1 Z" fill="#dcdcdc"/><g fill="none" stroke="#dcdcdc" stroke-width="1.1" stroke-linecap="round"><path d="M7.9 4.4 C8.9 5.4 8.9 7.2 7.9 8.2"/><path d="M9.5 2.9 C11.4 4.8 11.4 7.8 9.5 9.7"/><path d="M11 1.6 C13.6 4.2 13.6 8.4 11 11"/></g></svg>
<svg style="left:1868px;top:3px;" width="12" height="15" viewBox="0 0 12 15"><path d="M2.2 4.2 L9.6 10.4 L6.2 13.4 V0.8 L9.6 3.8 L2.2 10" fill="none" stroke="#dcdcdc" stroke-width="1.1" stroke-linejoin="miter"/></svg>
<svg style="left:1883px;top:4px;" width="18" height="13" viewBox="0 0 18 13"><path d="M3.6 1.8 C4.6 1.3 5.6 1.1 6.3 1 L6.8 1.9 C7.8 1.8 9 1.8 10 1.9 L10.5 1 C11.2 1.1 12.2 1.3 13.2 1.8 C15.2 4.6 16.2 7.6 15.9 10 C14.6 10.9 13.4 11.3 12.4 11.5 L11.6 10.2 C12.2 10 12.6 9.8 13 9.5 C10 10.8 6.8 10.8 3.8 9.5 C4.2 9.8 4.6 10 5.2 10.2 L4.4 11.5 C3.4 11.3 2.2 10.9 0.9 10 C0.6 7.6 1.6 4.6 3.6 1.8 Z" fill="#e6e6e6"/><ellipse cx="6" cy="6.9" rx="1.4" ry="1.6" fill="#2f2f2f"/><ellipse cx="10.8" cy="6.9" rx="1.4" ry="1.6" fill="#2f2f2f"/><circle cx="14" cy="1.7" r="2.2" fill="#f0303c"/></svg>
<svg style="left:1902px;top:4px;" width="16" height="13" viewBox="0 0 16 13"><path d="M8 11.6 L1.2 3.4 C5 0.2 11 0.2 14.8 3.4 Z" fill="#8a8a8a"/><path d="M8 11.6 L3.1 5.7 C6 3.4 10 3.4 12.9 5.7 Z" fill="#e6e6e6"/></svg>
<svg style="left:1601px;top:733px;" width="18" height="18" viewBox="0 0 18 18"><defs><linearGradient id="okg" x1="0" y1="0" x2="0" y2="1"><stop offset="0" stop-color="#93a67e"/><stop offset="0.45" stop-color="#74885e"/><stop offset="1" stop-color="#5a6b46"/></linearGradient></defs><ellipse cx="8.2" cy="16.6" rx="6.6" ry="1.1" fill="#aaa" opacity="0.45"/><path d="M9.4 1.2 H16.7 V7.7 L11.4 13.3 H7.5 V16.7 L1.2 10.7 L6.9 5.1 V7.3 H9.4 Z" fill="url(#okg)" stroke="#4c5a39" stroke-width="0.8" stroke-linejoin="round"/></svg>
<svg style="left:1665px;top:734px;" width="15" height="17" viewBox="0 0 15 17"><ellipse cx="6.5" cy="15.6" rx="5" ry="0.9" fill="#aaa" opacity="0.4"/><g fill="none" stroke-linecap="round"><path d="M4.1 2.7 C5.9 6.2 8.4 10.4 10.9 14.3" stroke="#8e3040" stroke-width="3.1"/><path d="M12.8 3.5 C9.4 6.2 5.8 9.4 2.4 12.3" stroke="#8e3040" stroke-width="2.9"/><path d="M4.1 2.7 C5.9 6.2 8.4 10.4 10.9 14.3" stroke="#c34d5f" stroke-width="2.3"/><path d="M12.8 3.5 C9.4 6.2 5.8 9.4 2.4 12.3" stroke="#c34d5f" stroke-width="2.1"/></g></svg>
</div>
</body></html>
